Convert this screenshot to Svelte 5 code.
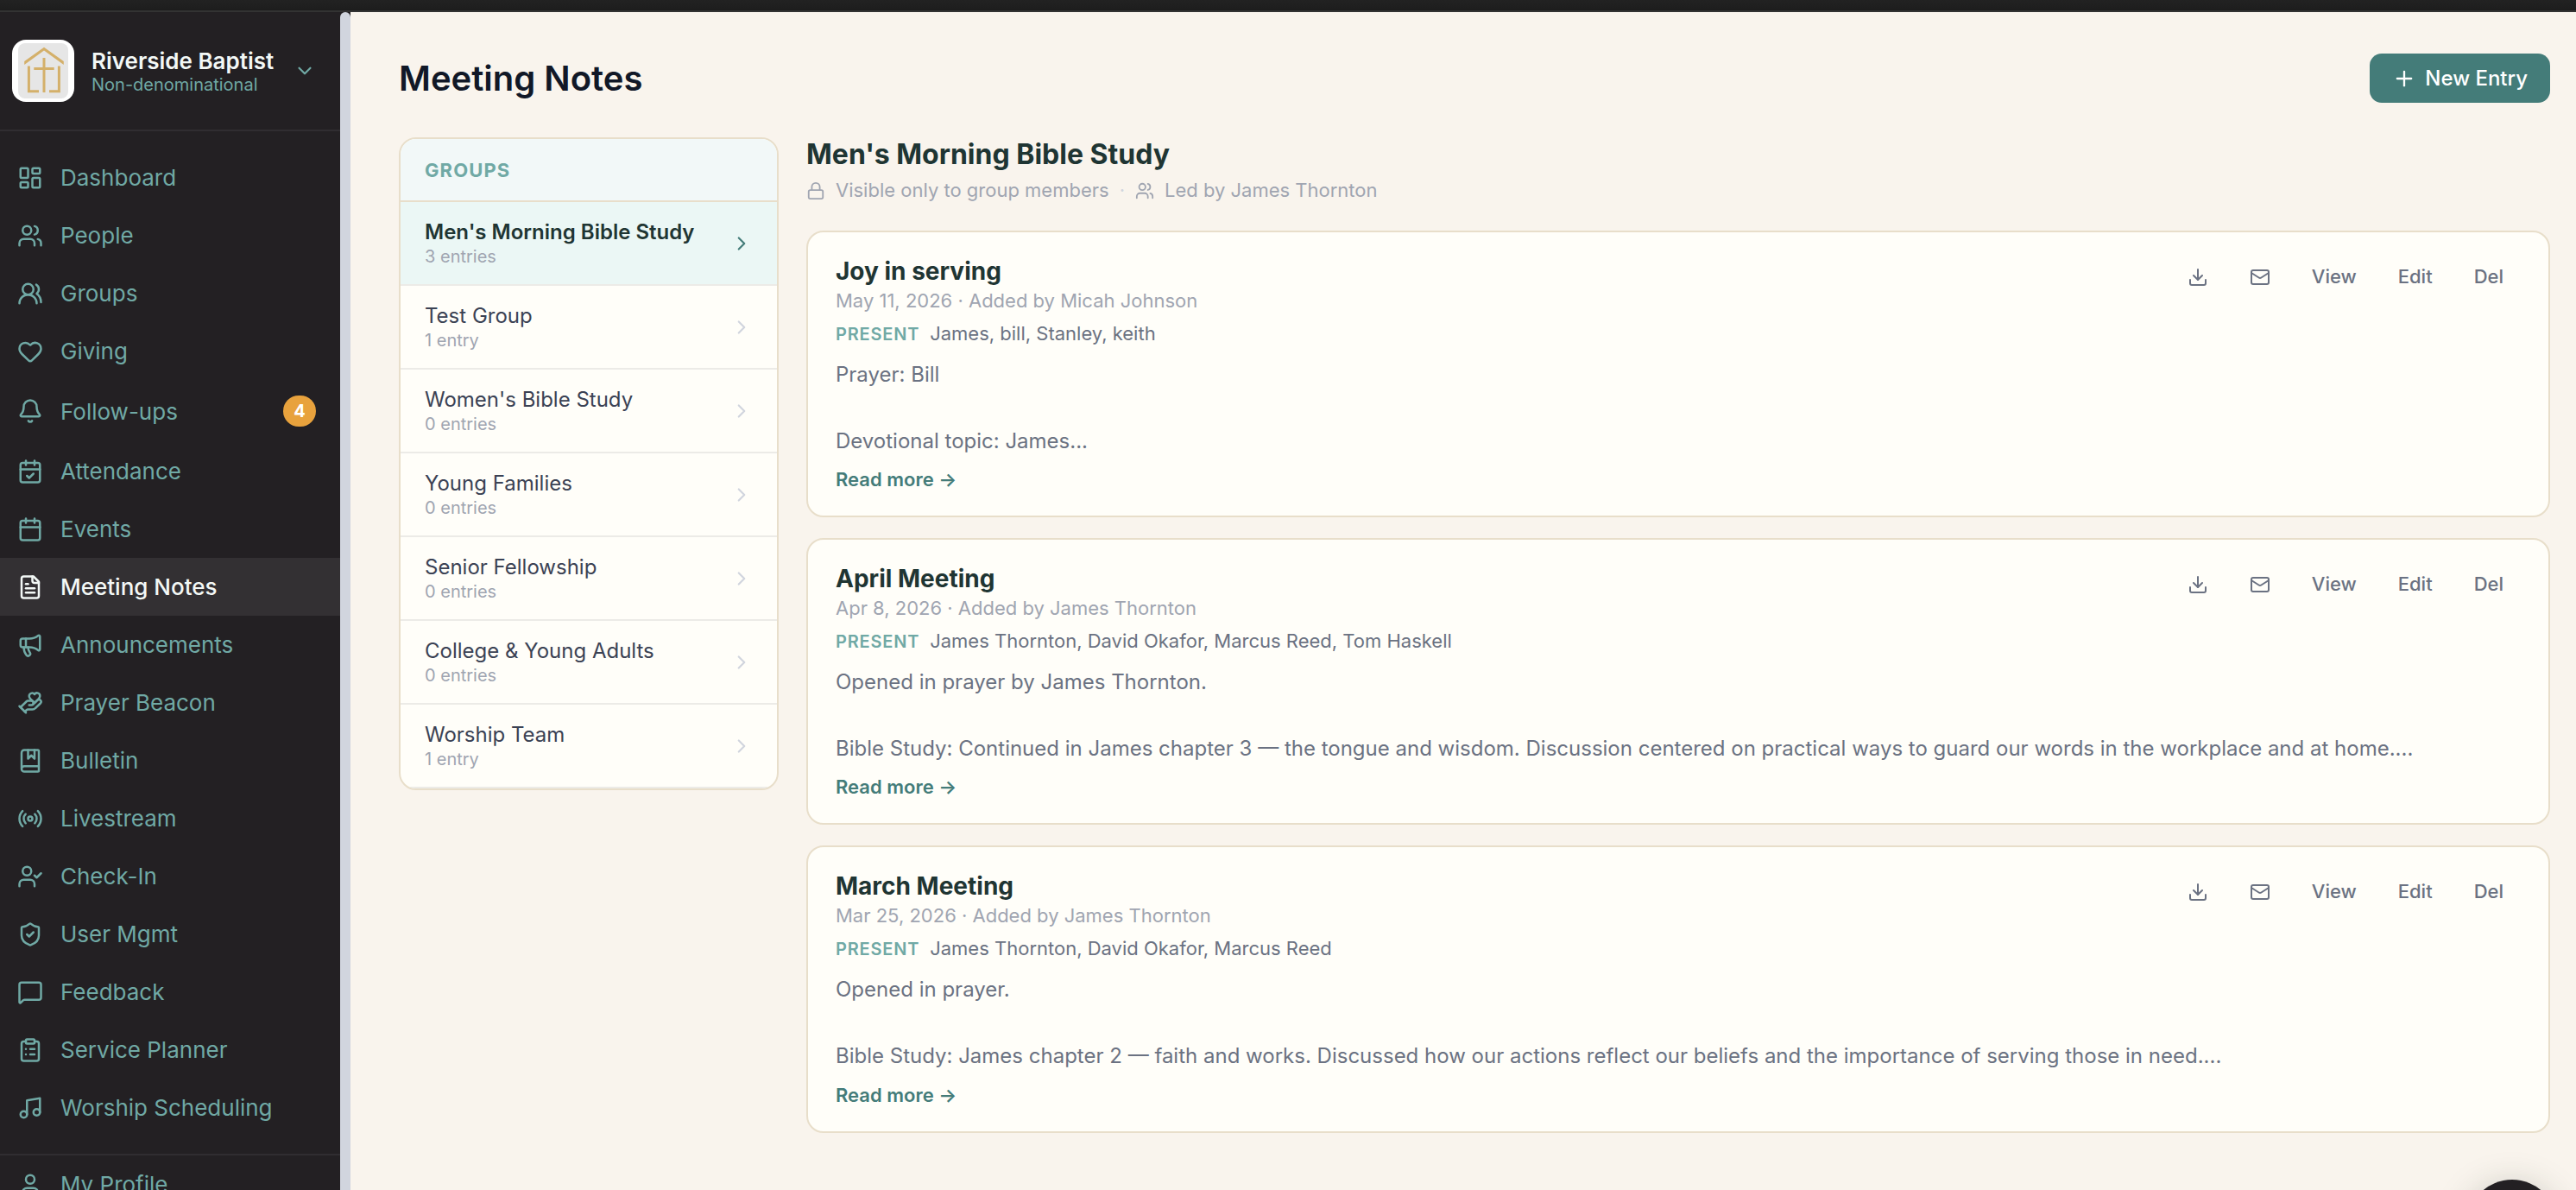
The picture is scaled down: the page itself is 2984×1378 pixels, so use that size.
<script>
  const icons = {
    dashboard: '<rect width="7" height="9" x="3" y="3" rx="1"/><rect width="7" height="5" x="14" y="3" rx="1"/><rect width="7" height="9" x="14" y="12" rx="1"/><rect width="7" height="5" x="3" y="16" rx="1"/>',
    users: '<path d="M16 21v-2a4 4 0 0 0-4-4H6a4 4 0 0 0-4 4v2"/><path d="M16 3.128a4 4 0 0 1 0 7.744"/><path d="M22 21v-2a4 4 0 0 0-3-3.87"/><circle cx="9" cy="7" r="4"/>',
    usersRound: '<path d="M18 21a8 8 0 0 0-16 0"/><circle cx="10" cy="8" r="5"/><path d="M22 20c0-3.37-2-6.5-4-8a5 5 0 0 0-.45-8.3"/>',
    heart: '<path d="M2 9.5a5.5 5.5 0 0 1 9.591-3.676.56.56 0 0 0 .818 0A5.49 5.49 0 0 1 22 9.5c0 2.29-1.5 4-3 5.5l-5.492 5.313a2 2 0 0 1-3 .019L5 15c-1.5-1.5-3-3.2-3-5.5"/>',
    bell: '<path d="M10.268 21a2 2 0 0 0 3.464 0"/><path d="M3.262 15.326A1 1 0 0 0 4 17h16a1 1 0 0 0 .74-1.673C19.41 13.956 18 12.499 18 8A6 6 0 0 0 6 8c0 4.499-1.411 5.956-2.738 7.326"/>',
    calendarCheck: '<path d="M8 2v4"/><path d="M16 2v4"/><rect width="18" height="18" x="3" y="4" rx="2"/><path d="M3 10h18"/><path d="m9 16 2 2 4-4"/>',
    calendar: '<path d="M8 2v4"/><path d="M16 2v4"/><rect width="18" height="18" x="3" y="4" rx="2"/><path d="M3 10h18"/>',
    fileText: '<path d="M15 2H6a2 2 0 0 0-2 2v16a2 2 0 0 0 2 2h12a2 2 0 0 0 2-2V7Z"/><path d="M14 2v4a2 2 0 0 0 2 2h4"/><path d="M10 9H8"/><path d="M16 13H8"/><path d="M16 17H8"/>',
    megaphone: '<path d="M11 6a13 13 0 0 0 8.4-2.8A1 1 0 0 1 21 4v12a1 1 0 0 1-1.6.8A13 13 0 0 0 11 14H5a2 2 0 0 1-2-2V8a2 2 0 0 1 2-2z"/><path d="M6 14a12 12 0 0 0 2.4 7.2 2 2 0 0 0 3.2-2.4A8 8 0 0 1 10 14"/><path d="M8 6v8"/>',
    handHeart: '<path d="M11 14h2a2 2 0 1 0 0-4h-3c-.6 0-1.1.2-1.4.6L3 16"/><path d="m7 20 1.6-1.4c.3-.4.8-.6 1.4-.6h4c1.1 0 2.1-.4 2.8-1.2l4.6-4.4a2 2 0 0 0-2.75-2.91l-4.2 3.9"/><path d="m2 15 6 6"/><path d="M19.5 8.5c.7-.7 1.5-1.6 1.5-2.7A2.73 2.73 0 0 0 16 4a2.78 2.78 0 0 0-5 1.8c0 1.2.8 2 1.5 2.8L16 12Z"/>',
    bookMarked: '<path d="M10 2v8l3-3 3 3V2"/><path d="M4 19.5v-15A2.5 2.5 0 0 1 6.5 2H19a1 1 0 0 1 1 1v18a1 1 0 0 1-1 1H6.5a1 1 0 0 1 0-5H20"/>',
    radio: '<path d="M16.247 7.761a6 6 0 0 1 0 8.478"/><path d="M19.075 4.933a10 10 0 0 1 0 14.134"/><path d="M4.925 19.067a10 10 0 0 1 0-14.134"/><path d="M7.753 16.239a6 6 0 0 1 0-8.478"/><circle cx="12" cy="12" r="2"/>',
    userCheck: '<path d="m16 11 2 2 4-4"/><path d="M16 21v-2a4 4 0 0 0-4-4H6a4 4 0 0 0-4 4v2"/><circle cx="9" cy="7" r="4"/>',
    shieldCheck: '<path d="M20 13c0 5-3.5 7.5-7.66 8.95a1 1 0 0 1-.67-.01C7.5 20.5 4 18 4 13V6a1 1 0 0 1 1-1c2 0 4.5-1.2 6.24-2.72a1.17 1.17 0 0 1 1.52 0C14.51 3.81 17 5 19 5a1 1 0 0 1 1 1z"/><path d="m9 12 2 2 4-4"/>',
    message: '<path d="M22 17a2 2 0 0 1-2 2H6.828a2 2 0 0 0-1.414.586l-2.202 2.202A.71.71 0 0 1 2 21.286V5a2 2 0 0 1 2-2h16a2 2 0 0 1 2 2z"/>',
    clipboard: '<rect width="8" height="4" x="8" y="2" rx="1"/><path d="M16 4h2a2 2 0 0 1 2 2v14a2 2 0 0 1-2 2H6a2 2 0 0 1-2-2V6a2 2 0 0 1 2-2h2"/><path d="M12 11h4"/><path d="M12 16h4"/><path d="M8 11h.01"/><path d="M8 16h.01"/>',
    music: '<path d="M9 18V5l12-2v13"/><circle cx="6" cy="18" r="3"/><circle cx="18" cy="16" r="3"/>',
    user: '<path d="M19 21v-2a4 4 0 0 0-4-4H9a4 4 0 0 0-4 4v2"/><circle cx="12" cy="7" r="4"/>',
    lock: '<rect width="18" height="11" x="3" y="11" rx="2"/><path d="M7 11V7a5 5 0 0 1 10 0v4"/>',
    plus: '<path d="M5 12h14"/><path d="M12 5v14"/>',
    chevronDown: '<path d="m6 9 6 6 6-6"/>',
    chevronRight: '<path d="m9 18 6-6-6-6"/>',
    download: '<path d="M12 15V3"/><path d="M21 15v4a2 2 0 0 1-2 2H5a2 2 0 0 1-2-2v-4"/><path d="m7 10 5 5 5-5"/>',
    mail: '<path d="m22 7-8.991 5.727a2 2 0 0 1-2.009 0L2 7"/><rect x="2" y="4" width="20" height="16" rx="2"/>',
  };

  const nav = [
    { label: 'Dashboard', icon: 'dashboard' },
    { label: 'People', icon: 'users' },
    { label: 'Groups', icon: 'usersRound' },
    { label: 'Giving', icon: 'heart' },
    { label: 'Follow-ups', icon: 'bell', badge: 4 },
    { label: 'Attendance', icon: 'calendarCheck' },
    { label: 'Events', icon: 'calendar' },
    { label: 'Meeting Notes', icon: 'fileText' },
    { label: 'Announcements', icon: 'megaphone' },
    { label: 'Prayer Beacon', icon: 'handHeart' },
    { label: 'Bulletin', icon: 'bookMarked' },
    { label: 'Livestream', icon: 'radio' },
    { label: 'Check-In', icon: 'userCheck' },
    { label: 'User Mgmt', icon: 'shieldCheck' },
    { label: 'Feedback', icon: 'message' },
    { label: 'Service Planner', icon: 'clipboard' },
    { label: 'Worship Scheduling', icon: 'music' },
  ];

  const groups = [
    { name: "Men's Morning Bible Study", count: 3 },
    { name: 'Test Group', count: 1 },
    { name: "Women's Bible Study", count: 0 },
    { name: 'Young Families', count: 0 },
    { name: 'Senior Fellowship', count: 0 },
    { name: 'College & Young Adults', count: 0 },
    { name: 'Worship Team', count: 1 },
  ];

  const entries = [
    {
      title: 'Joy in serving',
      date: 'May 11, 2026',
      author: 'Micah Johnson',
      present: 'James, bill, Stanley, keith',
      body: 'Prayer: Bill\n\nDevotional topic: James...',
    },
    {
      title: 'April Meeting',
      date: 'Apr 8, 2026',
      author: 'James Thornton',
      present: 'James Thornton, David Okafor, Marcus Reed, Tom Haskell',
      body: 'Opened in prayer by James Thornton.\n\nBible Study: Continued in James chapter 3 — the tongue and wisdom. Discussion centered on practical ways to guard our words in the workplace and at home....',
    },
    {
      title: 'March Meeting',
      date: 'Mar 25, 2026',
      author: 'James Thornton',
      present: 'James Thornton, David Okafor, Marcus Reed',
      body: 'Opened in prayer.\n\nBible Study: James chapter 2 — faith and works. Discussed how our actions reflect our beliefs and the importance of serving those in need....',
    },
  ];

  let page = $state('Meeting Notes');
  let selected = $state(0);
</script>

{#snippet icon(name, size)}
  <svg class="icon {size}" viewBox="0 0 24 24" aria-hidden="true">{@html icons[name]}</svg>
{/snippet}

<div class="app">
  <div class="topbar"></div>

  <div class="shell">
    <aside class="sidebar">
      <div class="church">
        <div class="logo">
          <svg viewBox="0 0 72 72" aria-hidden="true">
            <rect x="7" y="4" width="58" height="64" rx="8" fill="#e6e6e6" />
            <path fill="#d4b06a" d="M37 8.8 59.8 25v4L37 12.6 14.2 29v-4z" />
            <g fill="none" stroke="#d4b06a" stroke-width="3">
              <path d="M19.4 30.5v29.2H31M54.4 30.5v29.2H43M37 21v40M25.3 33.4h23.4" />
            </g>
          </svg>
        </div>
        <div class="church-text">
          <span class="church-name">Riverside Baptist</span>
          <span class="church-type">Non-denominational</span>
        </div>
        {@render icon('chevronDown', 'md')}
      </div>

      <nav>
        {#each nav as item}
          <button class="nav-item" class:active={page === item.label} onclick={() => (page = item.label)}>
            {@render icon(item.icon, 'nav')}
            <span>{item.label}</span>
            {#if item.badge}<span class="badge">{item.badge}</span>{/if}
          </button>
        {/each}
      </nav>

      <div class="sidebar-foot">
        <button class="nav-item">
          {@render icon('user', 'nav')}
          <span>My Profile</span>
        </button>
      </div>
    </aside>

    <div class="scrollbar"><div class="thumb"></div></div>

    <main>
      <header class="page-head">
        <h1>Meeting Notes</h1>
        <button class="new-entry">{@render icon('plus', 'lg')}New Entry</button>
      </header>

      <div class="columns">
        <section class="groups">
          <div class="groups-head">Groups</div>
          {#each groups as group, i}
            <button class="group" class:active={selected === i} onclick={() => (selected = i)}>
              <span class="group-text">
                <span class="group-name">{group.name}</span>
                <span class="group-count">{group.count} {group.count === 1 ? 'entry' : 'entries'}</span>
              </span>
              {@render icon('chevronRight', 'md')}
            </button>
          {/each}
        </section>

        <section class="notes">
          <div class="notes-head">
            <h2>{groups[selected].name}</h2>
            <div class="notes-meta">
              {@render icon('lock', 'sm')}
              <span>Visible only to group members</span>
              <span class="dot">·</span>
              {@render icon('users', 'sm')}
              <span>Led by James Thornton</span>
            </div>
          </div>

          {#each entries as entry}
            <article class="card">
              <div class="card-head">
                <div>
                  <h3>{entry.title}</h3>
                  <div class="card-date">{entry.date} · Added by {entry.author}</div>
                </div>
                <div class="actions">
                  <button aria-label="Download">{@render icon('download', 'act')}</button>
                  <button aria-label="Email">{@render icon('mail', 'act')}</button>
                  <button>View</button>
                  <button>Edit</button>
                  <button>Del</button>
                </div>
              </div>
              <div class="present"><span class="present-label">Present</span>{entry.present}</div>
              <p class="body">{entry.body}</p>
              <button class="read-more">Read more →</button>
            </article>
          {/each}
        </section>
      </div>
    </main>
  </div>

  <button class="fab" aria-label="Help"></button>
</div>

<style>
  :global(body) {
    margin: 0;
    overflow: hidden;
  }

  .app {
    position: relative;
    display: flex;
    flex-direction: column;
    height: 100vh;
    overflow: hidden;
    background: #f9f4ed;
    font-family: Inter, 'Liberation Sans', sans-serif;
    -webkit-font-smoothing: antialiased;
  }

  button {
    margin: 0;
    padding: 0;
    border: none;
    background: none;
    font: inherit;
    color: inherit;
    text-align: left;
    cursor: pointer;
  }

  h1, h2, h3, p {
    margin: 0;
  }

  .icon {
    flex-shrink: 0;
    display: block;
    fill: none;
    stroke: currentColor;
    stroke-width: 2;
    stroke-linecap: round;
    stroke-linejoin: round;
  }

  .nav { width: 30px; height: 30px; }
  .sm { width: 22px; height: 22px; }
  .act { width: 24px; height: 24px; }
  .md { width: 26px; height: 26px; }
  .lg { width: 28px; height: 28px; }

  .topbar {
    flex-shrink: 0;
    height: 12px;
    background: linear-gradient(#222, #1d1d1d);
    border-bottom: 2px solid #333;
  }

  .shell {
    flex: 1;
    display: flex;
    min-height: 0;
  }

  .sidebar {
    width: 394px;
    flex-shrink: 0;
    overflow: hidden;
    background: #232023;
    color: #70a9a5;
  }

  .church {
    display: flex;
    align-items: center;
    gap: 20px;
    padding: 32px 28px 32px 14px;
    border-bottom: 2px solid #302d31;
  }

  .logo {
    width: 72px;
    height: 72px;
    flex-shrink: 0;
    border-radius: 16px;
    background: #fff;
  }

  .logo svg {
    display: block;
  }

  .church-text {
    flex: 1;
    display: flex;
    flex-direction: column;
  }

  .church-name {
    font-size: 26px;
    font-weight: 600;
    color: #f3f8f6;
  }

  .church-type {
    font-size: 20px;
  }

  nav {
    padding: 20px 0;
  }

  .nav-item {
    display: flex;
    align-items: center;
    gap: 20px;
    width: 100%;
    min-height: 67px;
    padding: 18px 28px 18px 20px;
    font-size: 26px;
    line-height: 31px;
  }

  .nav-item.active {
    background: #333033;
    color: #f3f8f6;
    font-weight: 500;
  }

  .badge {
    margin-left: auto;
    min-width: 38px;
    height: 36px;
    border-radius: 20px;
    background: #e8a23d;
    color: #fff;
    font-size: 20px;
    font-weight: 700;
    line-height: 36px;
    text-align: center;
  }

  .sidebar-foot {
    border-top: 2px solid #302d31;
  }

  .scrollbar {
    width: 12px;
    flex-shrink: 0;
    background: #232023;
  }

  .thumb {
    height: 100%;
    border-radius: 6px 6px 0 0;
    background: #d1d5de;
  }

  main {
    flex: 1;
    min-width: 0;
    padding: 48px 30px 0 56px;
  }

  .page-head {
    display: flex;
    align-items: center;
    justify-content: space-between;
    margin-bottom: 40px;
  }

  h1 {
    font-size: 40px;
    font-weight: 600;
    line-height: 57px;
    color: #111827;
  }

  .new-entry {
    display: flex;
    align-items: center;
    gap: 10px;
    height: 57px;
    padding: 0 26px;
    border-radius: 14px;
    background: #447c79;
    color: #fff;
    font-size: 24px;
    font-weight: 500;
  }

  .columns {
    display: flex;
    align-items: flex-start;
    gap: 32px;
  }

  .groups {
    box-sizing: border-box;
    width: 440px;
    flex-shrink: 0;
    overflow: hidden;
    border: 2px solid #e8deca;
    border-radius: 20px;
    background: #fffef9;
  }

  .groups-head {
    padding: 23px 28px 21px;
    border-bottom: 2px solid #e8deca;
    background: #f2f8f8;
    color: #70a9a5;
    font-size: 22px;
    font-weight: 700;
    letter-spacing: 0.05em;
    line-height: 27px;
    text-transform: uppercase;
  }

  .group {
    display: flex;
    align-items: center;
    width: 100%;
    padding: 20px 28px;
    border-bottom: 2px solid #ecebe7;
    color: #d1d5de;
  }

  .group-text {
    flex: 1;
    display: flex;
    flex-direction: column;
    gap: 2px;
  }

  .group-name {
    font-size: 24px;
    line-height: 29px;
    color: #3b4254;
  }

  .group-count {
    font-size: 20px;
    line-height: 24px;
    color: #a0a5b1;
  }

  .group.active {
    background: #ebf7f5;
    color: #447c79;
  }

  .group.active .group-name {
    font-weight: 600;
    color: #1f3533;
  }

  .notes {
    flex: 1;
    min-width: 0;
    display: flex;
    flex-direction: column;
    gap: 24px;
  }

  .notes-head {
    height: 84px;
  }

  h2 {
    font-size: 32px;
    font-weight: 700;
    line-height: 39px;
    color: #1f3533;
  }

  .notes-meta {
    display: flex;
    align-items: center;
    gap: 12px;
    margin-top: 9px;
    font-size: 22px;
    line-height: 27px;
    color: #a0a5b1;
  }

  .dot {
    color: #d1d5de;
  }

  .card {
    padding: 28px 32px;
    border: 2px solid #e8deca;
    border-radius: 20px;
    background: #fffef9;
  }

  .card-head {
    display: flex;
    align-items: flex-start;
    justify-content: space-between;
  }

  h3 {
    margin-bottom: 4px;
    font-size: 28px;
    font-weight: 700;
    line-height: 34px;
    color: #1f3533;
  }

  .card-date {
    font-size: 22px;
    line-height: 27px;
    color: #a0a5b1;
  }

  .actions {
    display: flex;
    align-items: center;
    gap: 8px;
  }

  .actions button {
    padding: 10px 20px;
    color: #6b7282;
    font-size: 22px;
    font-weight: 500;
    line-height: 27px;
  }

  .present {
    margin-top: 11px;
    font-size: 22px;
    line-height: 27px;
    color: #6b7282;
  }

  .present-label {
    margin-right: 12px;
    color: #70a9a5;
    font-size: 20px;
    font-weight: 600;
    letter-spacing: 0.04em;
    text-transform: uppercase;
  }

  .body {
    margin-top: 14px;
    font-size: 24px;
    line-height: 38.4px;
    color: #6b7282;
    white-space: pre-line;
  }

  .read-more {
    display: block;
    margin-top: 12px;
    color: #447c79;
    font-size: 22px;
    font-weight: 600;
    line-height: 27px;
  }

  .fab {
    position: absolute;
    top: 1366px;
    right: 22px;
    width: 104px;
    height: 104px;
    border-radius: 50%;
    background: #232023;
    box-shadow: 0 8px 40px rgba(35, 50, 40, 0.25);
  }
</style>
